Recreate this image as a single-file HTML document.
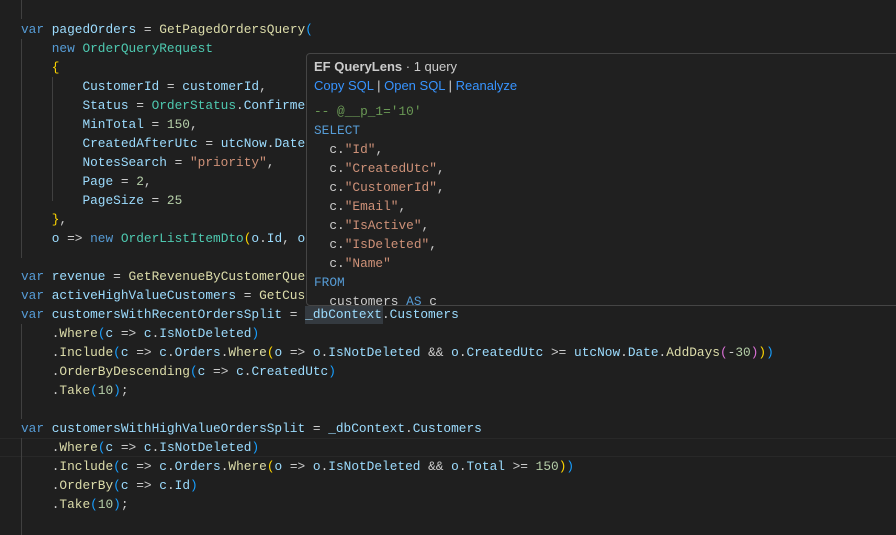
<!DOCTYPE html>
<html><head><meta charset="utf-8"><style>
html,body{margin:0;padding:0;width:896px;height:535px;overflow:hidden;background:#1f1f1f;}
.ed{position:absolute;left:0;top:0;width:896px;height:535px;}
.l{position:absolute;left:21px;height:19px;line-height:19px;font-family:"Liberation Mono",monospace;font-size:12.8px;color:#cccccc;white-space:pre;}
.k{color:#569cd6}.v{color:#9cdcfe}.f{color:#dcdcaa}.t{color:#4ec9b0}.s{color:#ce9178}.n{color:#b5cea8}
.y{color:#ffd700}.b{color:#179fff}.p{color:#da70d6}.g{color:#6a9955}
.guide{position:absolute;width:1px;background:#404040;}
.cur{position:absolute;left:0;width:896px;height:17px;border-top:1px solid #282828;border-bottom:1px solid #282828;}
.pop{position:absolute;left:306px;top:53px;width:600px;height:251px;background:#202020;border:1px solid #454545;border-radius:4px;overflow:hidden;}
.pl{position:absolute;left:7px;height:19px;line-height:19px;white-space:pre;}
.ps{font-family:"Liberation Sans",sans-serif;font-size:13px;}
.pm{font-family:"Liberation Mono",monospace;font-size:12.8px;color:#cccccc;}
a{color:#3794ff;text-decoration:none}
</style></head><body><div class="ed">
<div class="cur" style="top:438px"></div>
<div class="guide" style="left:21px;top:0;height:19px"></div>
<div class="guide" style="left:21px;top:39px;height:219px"></div>
<div class="guide" style="left:21px;top:324px;height:95px"></div>
<div class="guide" style="left:21px;top:438px;height:97px"></div>
<div class="guide" style="left:52px;top:77px;height:124px"></div>
<div class="l" style="top:20px"><span class="k">var</span> <span class="v">pagedOrders</span> = <span class="f">GetPagedOrdersQuery</span><span class="b">(</span></div>
<div class="l" style="top:39px">    <span class="k">new</span> <span class="t">OrderQueryRequest</span></div>
<div class="l" style="top:58px">    <span class="y">{</span></div>
<div class="l" style="top:77px">        <span class="v">CustomerId</span> = <span class="v">customerId</span>,</div>
<div class="l" style="top:96px">        <span class="v">Status</span> = <span class="t">OrderStatus</span>.<span class="v">Confirmed</span></div>
<div class="l" style="top:115px">        <span class="v">MinTotal</span> = <span class="n">150</span>,</div>
<div class="l" style="top:134px">        <span class="v">CreatedAfterUtc</span> = <span class="v">utcNow</span>.<span class="v">Date</span></div>
<div class="l" style="top:153px">        <span class="v">NotesSearch</span> = <span class="s">"priority"</span>,</div>
<div class="l" style="top:172px">        <span class="v">Page</span> = <span class="n">2</span>,</div>
<div class="l" style="top:191px">        <span class="v">PageSize</span> = <span class="n">25</span></div>
<div class="l" style="top:210px">    <span class="y">}</span>,</div>
<div class="l" style="top:229px">    <span class="v">o</span> =&gt; <span class="k">new</span> <span class="t">OrderListItemDto</span><span class="y">(</span><span class="v">o</span>.<span class="v">Id</span>, <span class="v">o</span></div>
<div class="l" style="top:267px"><span class="k">var</span> <span class="v">revenue</span> = <span class="f">GetRevenueByCustomerQuery</span></div>
<div class="l" style="top:286px"><span class="k">var</span> <span class="v">activeHighValueCustomers</span> = <span class="f">GetCustomers</span></div>
<div style="position:absolute;left:305px;top:306px;width:78px;height:18px;background:#343a40"></div>
<div class="l" style="top:305px"><span class="k">var</span> <span class="v">customersWithRecentOrdersSplit</span> = <span class="v">_dbContext</span>.<span class="v">Customers</span></div>
<div class="l" style="top:324px">    .<span class="f">Where</span><span class="b">(</span><span class="v">c</span> =&gt; <span class="v">c</span>.<span class="v">IsNotDeleted</span><span class="b">)</span></div>
<div class="l" style="top:343px">    .<span class="f">Include</span><span class="b">(</span><span class="v">c</span> =&gt; <span class="v">c</span>.<span class="v">Orders</span>.<span class="f">Where</span><span class="y">(</span><span class="v">o</span> =&gt; <span class="v">o</span>.<span class="v">IsNotDeleted</span> &amp;&amp; <span class="v">o</span>.<span class="v">CreatedUtc</span> &gt;= <span class="v">utcNow</span>.<span class="v">Date</span>.<span class="f">AddDays</span><span class="p">(</span>-<span class="n">30</span><span class="p">)</span><span class="y">)</span><span class="b">)</span></div>
<div class="l" style="top:362px">    .<span class="f">OrderByDescending</span><span class="b">(</span><span class="v">c</span> =&gt; <span class="v">c</span>.<span class="v">CreatedUtc</span><span class="b">)</span></div>
<div class="l" style="top:381px">    .<span class="f">Take</span><span class="b">(</span><span class="n">10</span><span class="b">)</span>;</div>
<div class="l" style="top:419px"><span class="k">var</span> <span class="v">customersWithHighValueOrdersSplit</span> = <span class="v">_dbContext</span>.<span class="v">Customers</span></div>
<div class="l" style="top:438px">    .<span class="f">Where</span><span class="b">(</span><span class="v">c</span> =&gt; <span class="v">c</span>.<span class="v">IsNotDeleted</span><span class="b">)</span></div>
<div class="l" style="top:457px">    .<span class="f">Include</span><span class="b">(</span><span class="v">c</span> =&gt; <span class="v">c</span>.<span class="v">Orders</span>.<span class="f">Where</span><span class="y">(</span><span class="v">o</span> =&gt; <span class="v">o</span>.<span class="v">IsNotDeleted</span> &amp;&amp; <span class="v">o</span>.<span class="v">Total</span> &gt;= <span class="n">150</span><span class="y">)</span><span class="b">)</span></div>
<div class="l" style="top:476px">    .<span class="f">OrderBy</span><span class="b">(</span><span class="v">c</span> =&gt; <span class="v">c</span>.<span class="v">Id</span><span class="b">)</span></div>
<div class="l" style="top:495px">    .<span class="f">Take</span><span class="b">(</span><span class="n">10</span><span class="b">)</span>;</div>

<div class="pop">
<div class="pl ps" style="top:3px;color:#cccccc"><b>EF QueryLens</b> · 1 query</div>
<div class="pl ps" style="top:22px;color:#cccccc"><a>Copy SQL</a> | <a>Open SQL</a> | <a>Reanalyze</a></div>
<div class="pl pm" style="top:48px"><span class="g">-- @__p_1='10'</span></div>
<div class="pl pm" style="top:67px"><span class="k">SELECT</span></div>
<div class="pl pm" style="top:86px">  c.<span class="s">"Id"</span>,</div>
<div class="pl pm" style="top:105px">  c.<span class="s">"CreatedUtc"</span>,</div>
<div class="pl pm" style="top:124px">  c.<span class="s">"CustomerId"</span>,</div>
<div class="pl pm" style="top:143px">  c.<span class="s">"Email"</span>,</div>
<div class="pl pm" style="top:162px">  c.<span class="s">"IsActive"</span>,</div>
<div class="pl pm" style="top:181px">  c.<span class="s">"IsDeleted"</span>,</div>
<div class="pl pm" style="top:200px">  c.<span class="s">"Name"</span></div>
<div class="pl pm" style="top:219px"><span class="k">FROM</span></div>
<div class="pl pm" style="top:238px">  customers <span class="k">AS</span> c</div>
</div>
</div></body></html>
